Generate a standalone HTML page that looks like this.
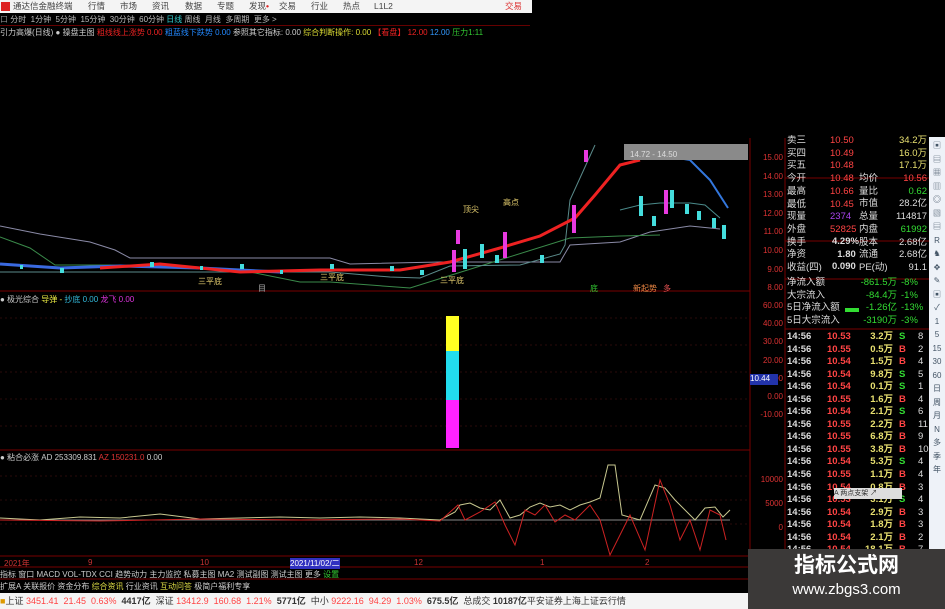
<!DOCTYPE html>
<html><head><meta charset="utf-8">
<style>
*{margin:0;padding:0;box-sizing:border-box}
body{width:945px;height:609px;background:#000;overflow:hidden;position:relative;font-family:"Liberation Sans","Noto Sans CJK SC",sans-serif;font-size:9px;color:#ccc}
.abs{position:absolute;white-space:nowrap}
#menu{left:0;top:0;width:532px;height:13px;background:#f4f4f4;color:#444;font-size:8.5px;line-height:13px}
#menu span{position:absolute}
#tb{left:0;top:14px;width:530px;height:11px;color:#bbb;font-size:8px;line-height:11px}
#ind{left:0;top:27px;font-size:8px;line-height:11px;color:#ccc}
.q{position:absolute;font-size:9.5px;line-height:12px}
.w{color:#ddd}.r{color:#ff4444}.g{color:#33dd33}.y{color:#e8e070}
</style></head><body>
<div class="abs" id="menu">
<span style="left:1px;top:2px;width:9px;height:9px;background:#d22"></span>
<span style="left:13px">通达信金融终端</span>
<span style="left:88px">行情</span><span style="left:120px">市场</span><span style="left:152px">资讯</span><span style="left:185px">数据</span><span style="left:217px">专题</span><span style="left:249px">发现<b style="color:#d22">•</b></span><span style="left:279px">交易</span><span style="left:311px">行业</span><span style="left:343px">热点</span><span style="left:374px">L1L2</span><span style="left:505px;color:#d33">交易</span>
</div>
<div class="abs" id="tb"><span style="color:#888">口</span> 分时 &nbsp;1分钟 &nbsp;5分钟 &nbsp;15分钟 &nbsp;30分钟 &nbsp;60分钟 <span style="color:#3cc">日线</span> 周线 &nbsp;月线 &nbsp;多周期 &nbsp;更多 &gt;</div>
<div style="position:absolute;left:0;top:25px;width:530px;height:1px;background:#600"></div>
<div class="abs" id="ind">引力高爆(日线) ● 操盘主图 <span style="color:#e22">粗线线上涨势 0.00</span> <span style="color:#28f">粗蓝线下跌势 0.00</span> 参照其它指标: 0.00 <span style="color:#dd3">综合判断操作: 0.00</span> <span style="color:#e22">【看盘】 12.00</span> <span style="color:#39f">12.00</span> <span style="color:#3c3">压力1:11</span></div>

<svg class="abs" style="left:0;top:0" width="945" height="609">
<!-- panel borders -->
<g stroke="#700" stroke-width="1" fill="none">
<line x1="0" y1="291" x2="750" y2="291"/>
<line x1="0" y1="450" x2="750" y2="450"/>
<line x1="0" y1="556" x2="750" y2="556"/>
<line x1="750" y1="138" x2="750" y2="556"/>
<line x1="785" y1="138" x2="785" y2="556"/>
<line x1="785" y1="178" x2="929" y2="178"/>
<line x1="785" y1="241" x2="929" y2="241"/>
<line x1="785" y1="279" x2="929" y2="279"/>
<line x1="785" y1="329" x2="929" y2="329"/>
<line x1="0" y1="567" x2="750" y2="567"/>
<line x1="0" y1="579" x2="750" y2="579"/>
</g>
<g stroke="#2a0a0a" stroke-dasharray="2,3">
<line x1="0" y1="318" x2="750" y2="318"/><line x1="0" y1="345" x2="750" y2="345"/><line x1="0" y1="372" x2="750" y2="372"/><line x1="0" y1="399" x2="750" y2="399"/><line x1="0" y1="426" x2="750" y2="426"/>
<line x1="0" y1="476" x2="750" y2="476"/><line x1="0" y1="500" x2="750" y2="500"/><line x1="0" y1="524" x2="750" y2="524"/>
</g>
<!-- main chart lines -->
<polyline points="0,226 40,234 90,242 115,250 130,258 230,258 330,258 350,264 440,262 470,262 510,262 560,262 570,245 620,242 650,232 690,226 720,229" fill="none" stroke="#8a8aa6" stroke-width="1"/>
<polyline points="0,237 30,248 55,265 110,265 180,268 240,270 300,282 330,282 410,288 570,238 620,236 660,235" fill="none" stroke="#3a8a4a" stroke-width="1"/>
<polyline points="0,272 160,272 250,272 330,272 390,277 420,278 450,266 520,265 560,254 565,245 570,200 580,178 595,145" fill="none" stroke="#5a8a8a" stroke-width="1"/>
<polyline points="0,264 60,268 120,266 200,268 280,272" fill="none" stroke="#3a6ae0" stroke-width="3"/>
<polyline points="100,268 160,264 240,272 320,270 400,270 450,262 500,248 540,236 575,218 595,195 620,165 640,160" fill="none" stroke="#e22" stroke-width="3"/>
<polyline points="635,158 660,155 690,160 710,180 728,208" fill="none" stroke="#3377dd" stroke-width="2"/>
<polyline points="620,210 640,205 660,203 690,203 705,205 720,218" fill="none" stroke="#4a8a8a" stroke-width="1"/>
<rect x="624" y="144" width="124" height="16" fill="#8a8a8a"/>
<text x="630" y="157" fill="#ddd" font-size="8">14.72 - 14.50</text>
<g fill="#44dddd">
<rect x="463" y="249" width="4" height="20"/><rect x="480" y="244" width="4" height="14"/><rect x="495" y="255" width="4" height="8"/><rect x="540" y="255" width="4" height="8"/><rect x="639" y="196" width="4" height="20"/><rect x="652" y="216" width="4" height="10"/><rect x="670" y="190" width="4" height="18"/><rect x="685" y="204" width="4" height="10"/><rect x="697" y="211" width="4" height="9"/><rect x="712" y="218" width="4" height="10"/><rect x="722" y="225" width="4" height="14"/>
<rect x="60" y="268" width="4" height="5"/><rect x="150" y="262" width="4" height="5"/><rect x="240" y="264" width="4" height="5"/><rect x="330" y="264" width="4" height="5"/><rect x="390" y="266" width="4" height="5"/><rect x="420" y="270" width="4" height="5"/><rect x="20" y="265" width="3" height="4"/><rect x="200" y="266" width="3" height="4"/><rect x="280" y="270" width="3" height="4"/>
</g>
<g fill="#e83ae0">
<rect x="452" y="250" width="4" height="22"/><rect x="456" y="230" width="4" height="14"/><rect x="503" y="232" width="4" height="26"/><rect x="572" y="205" width="4" height="28"/><rect x="584" y="150" width="4" height="12"/><rect x="664" y="190" width="4" height="24"/>
</g>
<g fill="#e8d070" font-size="8"><text x="463" y="212">顶尖</text><text x="503" y="205">高点</text><text x="198" y="284">三平底</text><text x="320" y="280">三平底</text><text x="440" y="283">三平底</text></g>
<g font-size="8"><text x="258" y="291" fill="#aaa">目</text><text x="590" y="291" fill="#3c3">底</text><text x="633" y="291" fill="#e84">新起势</text><text x="663" y="291" fill="#e55">多</text></g>
<!-- panel2 bar -->
<rect x="446" y="316" width="13" height="35" fill="#ffff22"/>
<rect x="446" y="351" width="13" height="49" fill="#22ddee"/>
<rect x="446" y="400" width="13" height="48" fill="#ff22ff"/>
<!-- panel3 lines -->
<line x1="0" y1="520" x2="730" y2="520" stroke="#888"/>
<polyline points="0,518 40,520 80,517 120,518 160,514 200,519 240,518 280,517 320,518 360,517 400,518 440,520 455,512 460,505 470,503 480,508 490,510 500,500 510,518 520,515 530,507 540,503 550,507 560,505 570,510 580,505 590,502 600,498 608,465 615,465 622,515 640,520 655,485 665,488 675,500 685,510 695,520 705,508 715,507 723,517 730,510" fill="none" stroke="#c8c890" stroke-width="1"/>
<polyline points="0,520 100,521 200,519 300,520 400,519 440,521 458,505 465,520 480,512 495,502 505,525 515,545 525,510 535,515 545,505 555,522 565,515 575,520 590,505 600,520 610,555 620,535 630,515 645,550 660,480 670,505 680,540 690,520 700,550 710,510 720,515 726,540" fill="none" stroke="#cc2222" stroke-width="1"/>
</svg>

<div class="abs" style="left:0;top:294px;font-size:8px;color:#ccc">● 极光综合 <span style="color:#ee4">导弹 -</span> <span style="color:#3bd">抄底 0.00</span> <span style="color:#d3d">龙飞 0.00</span></div>
<div class="abs" style="left:0;top:452px;font-size:8px;color:#ccc">● 粘合必涨 AD 253309.831 <span style="color:#d33">AZ 150231.0</span> 0.00</div>

<!-- price axis labels -->
<div class="abs" style="left:752px;top:149px;font-size:8px;line-height:18.6px;color:#d33;width:31px;text-align:right">15.00<br>14.00<br>13.00<br>12.00<br>11.00<br>10.00<br>9.00<br>8.00</div>
<div class="abs" style="left:752px;top:297px;font-size:8px;line-height:18.2px;color:#d33;width:31px;text-align:right">60.00<br>40.00<br>30.00<br>20.00<br>10.00<br>0.00<br>-10.00</div>
<div class="abs" style="left:750px;top:374px;width:28px;height:11px;background:#2233aa;color:#fff;font-size:8px">10.44</div>
<div class="abs" style="left:752px;top:468px;font-size:8px;line-height:24px;color:#d33;width:31px;text-align:right">10000<br>5000<br>0</div>

<!-- quotes -->
<div style="position:absolute;left:787px;top:135px;width:142px;height:420px;overflow:hidden">
<div class="q w" style="left:0;top:0;line-height:12.7px">卖三<br>买四<br>买五<br>今开<br>最高<br>最低<br>现量<br>外盘<br>换手<br>净资<br>收益(四)</div>
<div class="q r" style="left:43px;top:0;line-height:12.7px">10.50<br>10.49<br>10.48<br>10.48<br>10.66<br>10.45<br><span style="color:#a4e">2374</span><br>52825</div>
<div class="q w" style="left:45px;top:101px;line-height:12.7px;font-weight:bold">4.29%<br>&nbsp;&nbsp;1.80<br>0.090</div>
<div class="q y" style="left:108px;top:0;line-height:12.7px;text-align:right;width:32px">34.2万<br>16.0万<br>17.1万</div>
<div class="q w" style="left:72px;top:38px;line-height:12.7px">均价<br>量比<br>市值<br>总量<br>内盘<br>股本<br>流通<br>PE(动)</div>
<div class="q" style="left:100px;top:38px;width:40px;text-align:right;line-height:12.7px"><span class="r">10.56</span><br><span class="g">0.62</span><br><span class="w">28.2亿</span><br><span class="w">114817</span><br><span class="g">61992</span><br><span class="w">2.68亿</span><br><span class="w">2.68亿</span><br><span class="w">91.1</span></div>
<div class="q w" style="left:0;top:142px;line-height:12.7px">净流入额<br>大宗流入<br>5日净流入额<br>5日大宗流入</div>
<div style="position:absolute;left:58px;top:173px;width:14px;height:4px;background:#3d3"></div>
<div class="q g" style="left:70px;top:142px;line-height:12.7px;width:40px;text-align:right">-861.5万<br>-84.4万<br>-1.26亿<br>-3190万</div>
<div class="q g" style="left:114px;top:142px;line-height:12.7px">-8%<br>-1%<br>-13%<br>-3%</div>
<div class="q" style="left:0;top:196px;line-height:12.55px;font-weight:bold">
<span class="w">14:56</span><br><span class="w">14:56</span><br><span class="w">14:56</span><br><span class="w">14:56</span><br><span class="w">14:56</span><br><span class="w">14:56</span><br><span class="w">14:56</span><br><span class="w">14:56</span><br><span class="w">14:56</span><br><span class="w">14:56</span><br><span class="w">14:56</span><br><span class="w">14:56</span><br><span class="w">14:56</span><br><span class="w">14:56</span><br><span class="w">14:56</span><br><span class="w">14:56</span><br><span class="w">14:56</span><br><span class="w">14:56</span></div>
<div class="q r" style="left:40px;top:196px;line-height:12.55px;font-weight:bold">10.53<br>10.55<br>10.54<br>10.54<br>10.54<br>10.55<br>10.54<br>10.55<br>10.55<br>10.55<br>10.54<br>10.55<br>10.54<br>10.53<br>10.54<br>10.54<br>10.54<br>10.54</div>
<div class="q y" style="left:76px;top:196px;line-height:12.55px;width:30px;text-align:right;font-weight:bold">3.2万<br>0.5万<br>1.5万<br>9.8万<br>0.1万<br>1.6万<br>2.1万<br>2.2万<br>6.8万<br>3.8万<br>5.3万<br>1.1万<br>0.8万<br>3.1万<br>2.9万<br>1.8万<br>2.1万<br>18.1万</div>
<div class="q" style="left:112px;top:196px;line-height:12.55px;font-weight:bold"><span class="g">S</span><br><span class="r">B</span><br><span class="r">B</span><br><span class="g">S</span><br><span class="g">S</span><br><span class="r">B</span><br><span class="g">S</span><br><span class="r">B</span><br><span class="r">B</span><br><span class="r">B</span><br><span class="g">S</span><br><span class="r">B</span><br><span class="r">B</span><br><span class="g">S</span><br><span class="r">B</span><br><span class="r">B</span><br><span class="r">B</span><br><span class="r">B</span></div>
<div class="q w" style="left:131px;top:196px;line-height:12.55px">8<br>2<br>4<br>5<br>1<br>4<br>6<br>11<br>9<br>10<br>4<br>4<br>3<br>4<br>3<br>3<br>2<br>7</div>
</div>
<div class="abs" style="left:834px;top:488px;width:68px;height:11px;background:#ddd;color:#333;font-size:7px;line-height:11px">A 两点支架 ↗</div>

<!-- right toolbar -->
<div class="abs" style="left:929px;top:137px;width:16px;height:420px;background:#eef2f8;color:#456;font-size:8px;text-align:center;line-height:13.5px;padding-top:2px">▣<br>▤<br>▦<br>▥<br>◎<br>▧<br>▤<br>R<br>♞<br>✥<br>✎<br>▣<br>✓<br>1<br>5<br>15<br>30<br>60<br>日<br>周<br>月<br>N<br>多<br>季<br>年</div>

<!-- bottom -->
<div class="abs" style="left:0;top:558px;font-size:8px;color:#c33;width:750px;height:9px">
<span style="position:absolute;left:4px">2021年</span><span style="position:absolute;left:88px">9</span><span style="position:absolute;left:200px">10</span><span style="position:absolute;left:290px;background:#3030c0;color:#fff">2021/11/02/二</span><span style="position:absolute;left:414px">12</span><span style="position:absolute;left:540px">1</span><span style="position:absolute;left:645px">2</span></div>
<div class="abs" style="left:0;top:569px;font-size:8px;color:#ccc">指标 窗口 MACD VOL-TDX CCI 趋势动力 主力监控 私募主图 MA2 测试副图 测试主图 更多 <span style="color:#3c3">设置</span></div>
<div class="abs" style="left:0;top:581px;font-size:8px;color:#ccc">扩展A 关联报价 资金分布 <span style="color:#dd4">综合资讯</span> 行业资讯 <span style="color:#dd4">互动问答</span> 极简户福利专享</div>
<div class="abs" style="left:0;top:593px;width:945px;height:16px;background:#f4f4f4;font-size:9px;line-height:16px;color:#333"><span style="color:#d90">■</span>上证 <span class="r">3451.41 &nbsp;21.45 &nbsp;0.63%</span> &nbsp;<b>4417亿</b> &nbsp;深证 <span class="r">13412.9 &nbsp;160.68 &nbsp;1.21%</span> &nbsp;<b>5771亿</b> &nbsp;中小 <span class="r">9222.16 &nbsp;94.29 &nbsp;1.03%</span> &nbsp;<b>675.5亿</b> &nbsp;总成交 <b>10187亿</b>平安证券上海上证云行情</div>
<div class="abs" style="left:748px;top:549px;width:197px;height:60px;background:#3b3938;color:#fff;text-align:center">
<div style="font-size:21px;font-weight:bold;line-height:28px;margin-top:3px">指标公式网</div>
<div style="font-size:15px;line-height:20px">www.zbgs3.com</div></div>
</body></html>
